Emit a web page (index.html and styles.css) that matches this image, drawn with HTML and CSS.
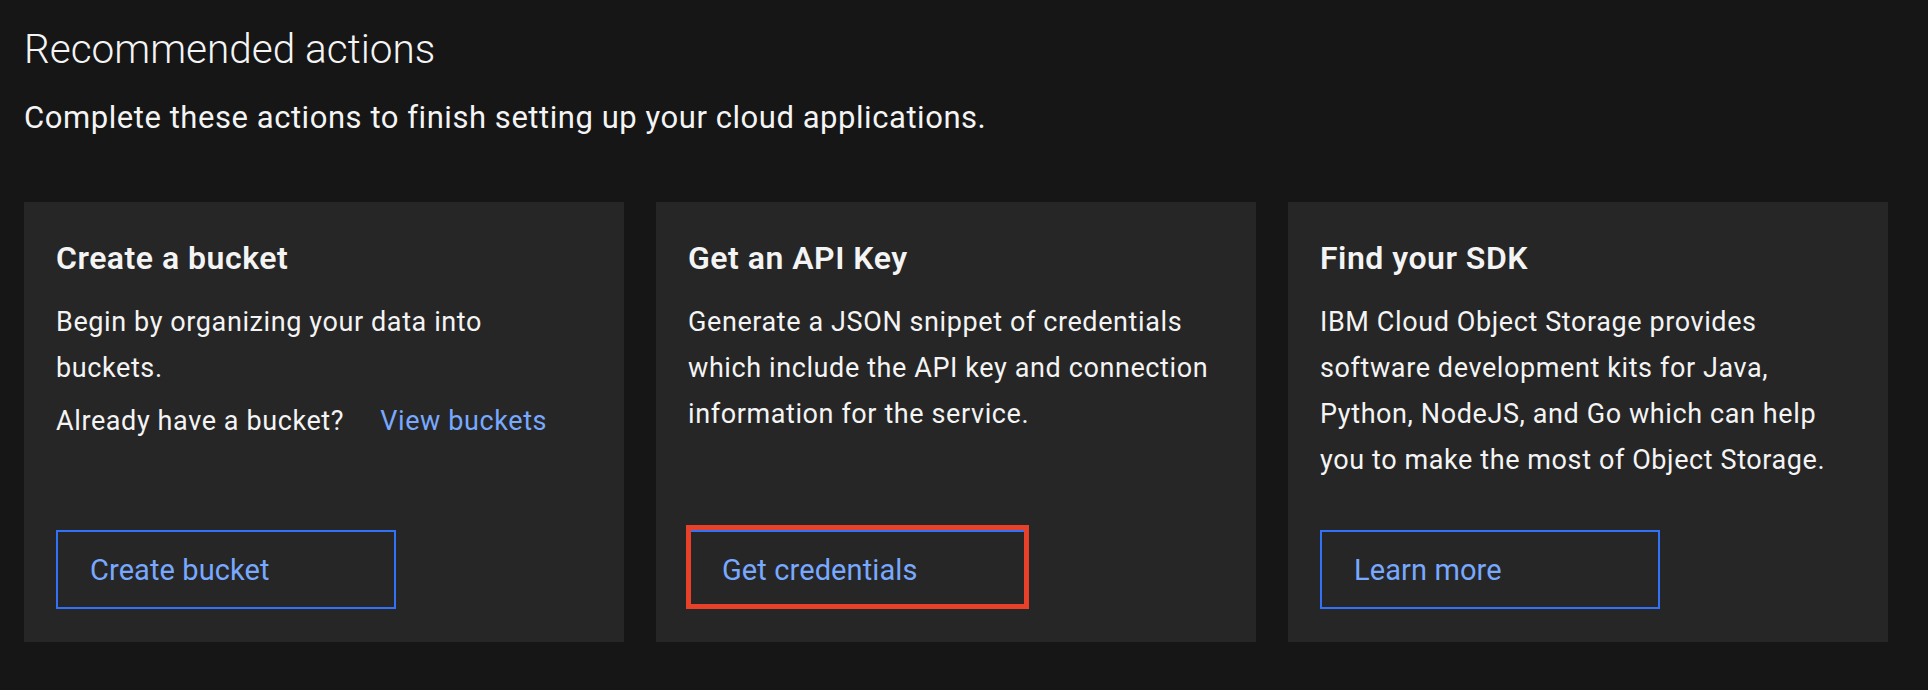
FILE: index.html
```html
<!DOCTYPE html>
<html lang="en">
<head>
<meta charset="utf-8">
<title>Recommended actions</title>
<link rel="stylesheet" href="styles.css">
</head>
<body>
<main class="page">
  <header class="intro">
    <h1 class="intro-title">Recommended actions</h1>
    <p class="intro-text">Complete these actions to finish setting up your cloud applications.</p>
  </header>
  <section class="cards">
    <article class="card">
      <h2 class="card-title">Create a bucket</h2>
      <p class="card-text">Begin by organizing your data into buckets.</p>
      <p class="card-text card-extra">Already have a bucket?<a class="card-link" href="#">View buckets</a></p>
      <a class="btn" href="#">Create bucket</a>
    </article>
    <article class="card">
      <h2 class="card-title">Get an API Key</h2>
      <p class="card-text">Generate a JSON snippet of credentials which include the API key and connection information for the service.</p>
      <a class="btn btn-highlight" href="#">Get credentials</a>
    </article>
    <article class="card">
      <h2 class="card-title">Find your SDK</h2>
      <p class="card-text">IBM Cloud Object Storage provides software development kits for Java, Python, NodeJS, and Go which can help you to make the most of Object Storage.</p>
      <a class="btn" href="#">Learn more</a>
    </article>
  </section>
</main>
</body>
</html>
```
FILE: styles.css
```css
html, body {
  margin: 0;
  padding: 0;
  background: #161616;
}

body {
  font-family: Roboto, "Liberation Sans", sans-serif;
  color: #f4f4f4;
}

.page {
  padding: 24px 40px 0 24px;
}

.intro-title {
  margin: 0;
  font-size: 40.5px;
  line-height: 50px;
  font-weight: 300;
}

.intro-text {
  margin: 24px 0 0;
  font-size: 31px;
  line-height: 40px;
  font-weight: 400;
  letter-spacing: 0.55px;
}

.cards {
  margin-top: 64px;
  display: grid;
  grid-template-columns: repeat(3, 600px);
  gap: 32px;
}

.card {
  background: #262626;
  min-height: 440px;
  box-sizing: border-box;
  padding: 36px 32px 33px;
  display: flex;
  flex-direction: column;
  align-items: flex-start;
}

.card-title {
  margin: 0;
  font-size: 32px;
  line-height: 40px;
  font-weight: 600;
  letter-spacing: 0.5px;
}

.card-text {
  margin: 21px 0 0;
  max-width: 528px;
  font-size: 27px;
  line-height: 46px;
  font-weight: 400;
  letter-spacing: 0.6px;
}

.card-extra {
  margin-top: 7px;
}

.card-link {
  margin-left: 36px;
  color: #78a9ff;
  text-decoration: none;
}

.btn {
  position: relative;
  margin-top: auto;
  box-sizing: border-box;
  width: 340px;
  height: 79px;
  border: 2px solid #3073f8;
  padding-left: 32px;
  display: flex;
  align-items: center;
  font-size: 29px;
  letter-spacing: 0.1px;
  color: #78a9ff;
  text-decoration: none;
}

.btn-highlight::after {
  content: "";
  position: absolute;
  left: -4px;
  right: -3px;
  top: -7px;
  bottom: -2px;
  border: 5px solid #e8412a;
}
```
